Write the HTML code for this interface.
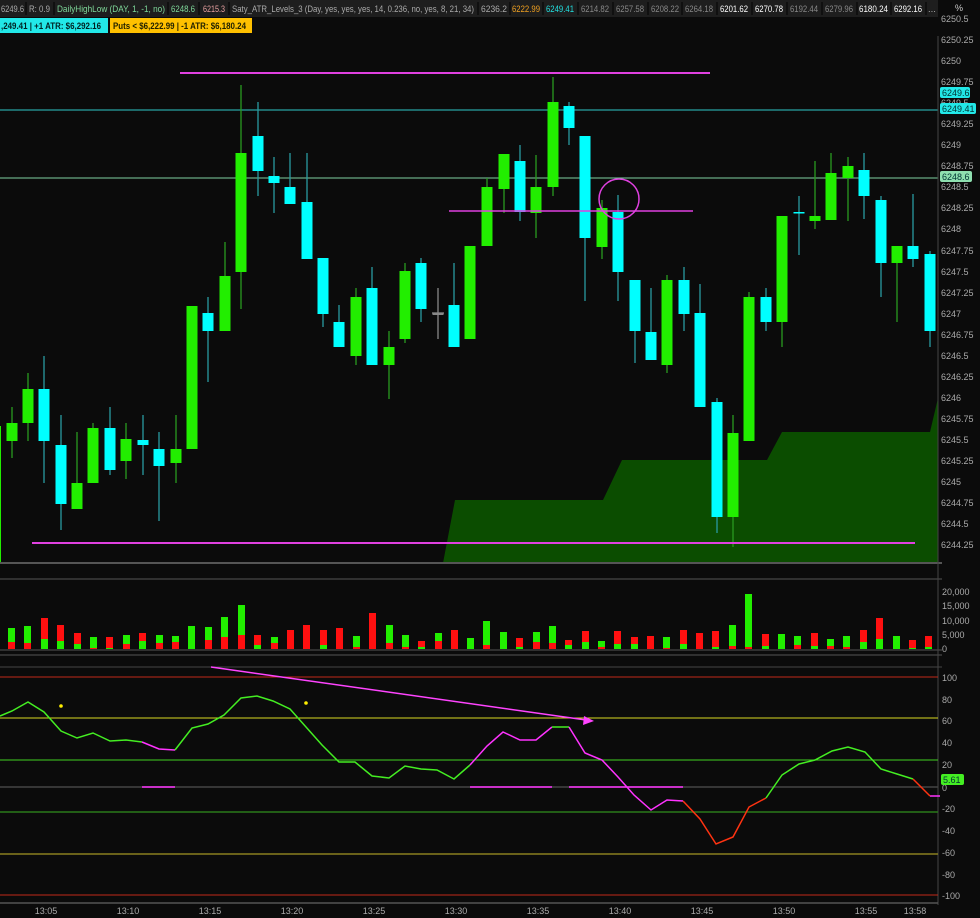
<!DOCTYPE html>
<html><head><meta charset="utf-8"><style>
html,body{margin:0;padding:0;background:#0b0b0b;width:980px;height:918px;overflow:hidden}
svg{display:block}
text{font-family:"Liberation Sans",sans-serif}
</style></head><body>
<svg id="s" width="980" height="918" xmlns="http://www.w3.org/2000/svg">
<rect width="980" height="918" fill="#0b0b0b"/>
<polygon points="443,563 455,500 603,500 622,460 767,460 782,432 930,432 938,398 938,563" fill="#0b4d00"/>
<line x1="0" y1="110" x2="938" y2="110" stroke="#2fc9c9" stroke-width="1"/>
<line x1="0" y1="178" x2="938" y2="178" stroke="#7fd0a0" stroke-width="1"/>
<g id="candles"></g>
<line x1="180" y1="73" x2="710" y2="73" stroke="#e040e0" stroke-width="2"/>
<line x1="449" y1="211" x2="693" y2="211" stroke="#e040e0" stroke-width="1.5"/>
<line x1="32" y1="543" x2="915" y2="543" stroke="#e040e0" stroke-width="2"/>
<circle cx="619" cy="199" r="20" fill="none" stroke="#e040e0" stroke-width="1.5"/>
<line x1="0" y1="426" x2="0" y2="562" stroke="#22ee00" stroke-width="2"/>
<line x1="0" y1="563" x2="942" y2="563" stroke="#555" stroke-width="2"/>
<line x1="0" y1="579" x2="942" y2="579" stroke="#555" stroke-width="1"/>
<line x1="0" y1="650" x2="942" y2="650" stroke="#555" stroke-width="1"/>
<line x1="0" y1="655" x2="942" y2="655" stroke="#555" stroke-width="1"/>
<line x1="0" y1="667" x2="942" y2="667" stroke="#444" stroke-width="1"/>
<line x1="938" y1="36" x2="938" y2="905" stroke="#444" stroke-width="1"/>
<g id="vol"></g>
<line x1="0" y1="677" x2="938" y2="677" stroke="#c0281a"/>
<line x1="0" y1="718" x2="938" y2="718" stroke="#d8d820"/>
<line x1="0" y1="760" x2="938" y2="760" stroke="#40d020"/>
<line x1="0" y1="787" x2="938" y2="787" stroke="#444" stroke-width="1.5"/>
<line x1="0" y1="812" x2="938" y2="812" stroke="#2a7a1a" stroke-width="1.5"/>
<line x1="0" y1="854" x2="938" y2="854" stroke="#8a8020" stroke-width="1.5"/>
<line x1="0" y1="895" x2="938" y2="895" stroke="#c0281a"/>
<line x1="0" y1="903" x2="938" y2="903" stroke="#555" stroke-width="1.5"/>
<g stroke="#ff33ff" stroke-width="1.5"><line x1="142" y1="787" x2="175" y2="787"/><line x1="470" y1="787" x2="552" y2="787"/><line x1="569" y1="787" x2="683" y2="787"/><line x1="930" y1="796" x2="940" y2="796"/></g>
<polyline fill="none" stroke="#44ee22" stroke-width="1.5" points="0,716 12,711 28,702 44,712 61,731 77,738 93,733 110,741 126,740 142,742"/>
<polyline fill="none" stroke="#ff33ff" stroke-width="1.5" points="142,742 159,749 175,750"/>
<polyline fill="none" stroke="#44ee22" stroke-width="1.5" points="175,750 192,728 208,724 224,715 241,698 257,696 273,701 290,709 306,727 322,745 339,762 355,762 372,776 389,778 405,766 421,769 437,770 454,779 470,765"/>
<polyline fill="none" stroke="#ff33ff" stroke-width="1.5" points="470,765 487,746 503,732 520,740 536,740 552,727"/>
<polyline fill="none" stroke="#44ee22" stroke-width="1.5" points="552,727 569,727"/>
<polyline fill="none" stroke="#ff33ff" stroke-width="1.5" points="569,727 585,753 602,760 618,777 634,795 651,810 667,800 683,801"/>
<polyline fill="none" stroke="#ff3311" stroke-width="1.5" points="683,801 700,819 716,844 733,837 749,807 766,798"/>
<polyline fill="none" stroke="#44ee22" stroke-width="1.5" points="766,798 782,775 799,764 815,760 832,751 848,747 865,752 881,769 897,774 913,779"/>
<polyline fill="none" stroke="#ff3311" stroke-width="1.5" points="913,779 930,796"/>
<circle cx="61" cy="706" r="1.8" fill="#ffee00"/><circle cx="306" cy="703" r="1.8" fill="#ffee00"/>
<line x1="211" y1="667" x2="586" y2="720" stroke="#ff44ff" stroke-width="1.5"/>
<polygon points="594,721 584,716 583,725" fill="#ff44ff"/>
<g font-size="9" fill="#aaa">
<text x="941" y="22">6250.5</text><text x="941" y="43">6250.25</text><text x="941" y="64">6250</text><text x="941" y="85">6249.75</text><text x="941" y="106">6249.5</text><text x="941" y="127">6249.25</text><text x="941" y="148">6249</text><text x="941" y="169">6248.75</text><text x="941" y="190">6248.5</text><text x="941" y="211">6248.25</text><text x="941" y="232">6248</text><text x="941" y="254">6247.75</text><text x="941" y="275">6247.5</text><text x="941" y="296">6247.25</text><text x="941" y="317">6247</text><text x="941" y="338">6246.75</text><text x="941" y="359">6246.5</text><text x="941" y="380">6246.25</text><text x="941" y="401">6246</text><text x="941" y="422">6245.75</text><text x="941" y="443">6245.5</text><text x="941" y="464">6245.25</text><text x="941" y="485">6245</text><text x="941" y="506">6244.75</text><text x="941" y="527">6244.5</text><text x="941" y="548">6244.25</text>
<text x="942" y="595">20,000</text><text x="942" y="609">15,000</text><text x="942" y="624">10,000</text><text x="942" y="638">5,000</text><text x="942" y="652">0</text>
<text x="942" y="681">100</text><text x="942" y="703">80</text><text x="942" y="724">60</text><text x="942" y="746">40</text><text x="942" y="768">20</text><text x="942" y="791">0</text><text x="942" y="812">-20</text><text x="942" y="834">-40</text><text x="942" y="856">-60</text><text x="942" y="878">-80</text><text x="942" y="899">-100</text>
</g>
<rect x="940" y="87" width="30" height="11" rx="2" fill="#22e8e8"/><text x="942" y="96" font-size="9" fill="#033">6249.6</text>
<rect x="940" y="103" width="36" height="11" rx="2" fill="#22e8e8"/><text x="942" y="112" font-size="9" fill="#033">6249.41</text>
<rect x="940" y="171" width="32" height="11" rx="2" fill="#8fe0b0"/><text x="942" y="180" font-size="9" fill="#033">6248.6</text>
<rect x="941" y="774" width="23" height="11" rx="2" fill="#44ee22"/><text x="943" y="783" font-size="9" fill="#033">5.61</text>
<g font-size="9" fill="#aaa" text-anchor="middle">
<text x="46" y="914">13:05</text><text x="128" y="914">13:10</text><text x="210" y="914">13:15</text><text x="292" y="914">13:20</text><text x="374" y="914">13:25</text><text x="456" y="914">13:30</text><text x="538" y="914">13:35</text><text x="620" y="914">13:40</text><text x="702" y="914">13:45</text><text x="784" y="914">13:50</text><text x="866" y="914">13:55</text><text x="915" y="914">13:58</text>
</g>
<rect x="0" y="0" width="938" height="17" fill="#1e1e1e"/>
<g font-size="9.5" lengthAdjust="spacingAndGlyphs">
<text x="1" y="12" fill="#aaa" textLength="23" lengthAdjust="spacingAndGlyphs">6249.6</text>
<text x="29" y="12" fill="#aaa" textLength="21" lengthAdjust="spacingAndGlyphs">R: 0.9</text>
<text x="57" y="12" fill="#7fd89a" textLength="108" lengthAdjust="spacingAndGlyphs">DailyHighLow (DAY, 1, -1, no)</text>
<text x="171" y="12" fill="#7fd89a" textLength="24" lengthAdjust="spacingAndGlyphs">6248.6</text>
<text x="203" y="12" fill="#e8a0a0" textLength="22" lengthAdjust="spacingAndGlyphs">6215.3</text>
<text x="232" y="12" fill="#aaa" textLength="242" lengthAdjust="spacingAndGlyphs">Saty_ATR_Levels_3 (Day, yes, yes, yes, 14, 0.236, no, yes, 8, 21, 34)</text>
<text x="481" y="12" fill="#aaa" textLength="26" lengthAdjust="spacingAndGlyphs">6236.2</text>
<text x="512" y="12" fill="#f0a020" textLength="28" lengthAdjust="spacingAndGlyphs">6222.99</text>
<text x="546" y="12" fill="#22e0e0" textLength="28" lengthAdjust="spacingAndGlyphs">6249.41</text>
<text x="581" y="12" fill="#888" textLength="28" lengthAdjust="spacingAndGlyphs">6214.82</text>
<text x="616" y="12" fill="#888" textLength="28" lengthAdjust="spacingAndGlyphs">6257.58</text>
<text x="651" y="12" fill="#888" textLength="28" lengthAdjust="spacingAndGlyphs">6208.22</text>
<text x="685" y="12" fill="#888" textLength="28" lengthAdjust="spacingAndGlyphs">6264.18</text>
<text x="720" y="12" fill="#fff" textLength="28" lengthAdjust="spacingAndGlyphs">6201.62</text>
<text x="755" y="12" fill="#fff" textLength="28" lengthAdjust="spacingAndGlyphs">6270.78</text>
<text x="790" y="12" fill="#888" textLength="28" lengthAdjust="spacingAndGlyphs">6192.44</text>
<text x="825" y="12" fill="#888" textLength="28" lengthAdjust="spacingAndGlyphs">6279.96</text>
<text x="859" y="12" fill="#fff" textLength="29" lengthAdjust="spacingAndGlyphs">6180.24</text>
<text x="894" y="12" fill="#fff" textLength="28" lengthAdjust="spacingAndGlyphs">6292.16</text>
<text x="928" y="12" fill="#aaa">...</text>
</g>
<g stroke="#0b0b0b" stroke-width="1.5"><line x1="26" y1="2" x2="26" y2="15"/><line x1="54" y1="2" x2="54" y2="15"/><line x1="168" y1="2" x2="168" y2="15"/><line x1="199" y1="2" x2="199" y2="15"/><line x1="229" y1="2" x2="229" y2="15"/><line x1="478" y1="2" x2="478" y2="15"/><line x1="510" y1="2" x2="510" y2="15"/><line x1="543" y1="2" x2="543" y2="15"/><line x1="578" y1="2" x2="578" y2="15"/><line x1="613" y1="2" x2="613" y2="15"/><line x1="648" y1="2" x2="648" y2="15"/><line x1="682" y1="2" x2="682" y2="15"/><line x1="717" y1="2" x2="717" y2="15"/><line x1="752" y1="2" x2="752" y2="15"/><line x1="787" y1="2" x2="787" y2="15"/><line x1="822" y1="2" x2="822" y2="15"/><line x1="857" y1="2" x2="857" y2="15"/><line x1="891" y1="2" x2="891" y2="15"/><line x1="926" y1="2" x2="926" y2="15"/></g>
<text x="955" y="11" font-size="9" fill="#ccc">%</text>
<rect x="0" y="18" width="108" height="15" fill="#22e8e8"/>
<text x="1" y="29" font-size="9.5" font-weight="bold" fill="#022" textLength="100" lengthAdjust="spacingAndGlyphs">,249.41 | +1 ATR: $6,292.16</text>
<rect x="110" y="18" width="142" height="15" fill="#ffc000"/>
<text x="113" y="29" font-size="9.5" font-weight="bold" fill="#220" textLength="133" lengthAdjust="spacingAndGlyphs">Puts &lt; $6,222.99 | -1 ATR: $6,180.24</text>
</svg>
<script>
var NS="http://www.w3.org/2000/svg";
function el(p,t,a){var e=document.createElementNS(NS,t);for(var k in a)e.setAttribute(k,a[k]);p.appendChild(e);return e;}
var C=[[12,423,441,407,458,'g'],[28,389,423,373,441,'g'],[44,389,441,356,483,'c'],[61,445,504,415,530,'c'],[77,483,509,432,509,'g'],[93,428,483,423,483,'g'],[110,428,470,407,475,'c'],[126,439,461,423,479,'g'],[143,440,445,415,475,'c'],[159,449,466,432,521,'c'],[176,449,463,415,483,'g'],[192,306,449,306,449,'g'],[208,313,331,297,382,'c'],[225,276,331,242,331,'g'],[241,153,272,85,309,'g'],[258,136,171,102,196,'c'],[274,176,183,157,213,'c'],[290,187,204,153,204,'c'],[307,202,259,153,259,'c'],[323,258,314,258,327,'c'],[339,322,347,305,347,'c'],[356,297,356,288,365,'g'],[372,288,365,267,365,'c'],[389,347,365,331,399,'g'],[405,271,339,263,343,'g'],[421,263,309,258,322,'c'],[438,313,315,288,339,'d'],[454,305,347,263,347,'c'],[470,246,339,246,339,'g'],[487,187,246,178,246,'g'],[504,154,189,154,213,'g'],[520,161,212,145,221,'c'],[536,187,213,155,238,'g'],[553,102,187,77,196,'g'],[569,106,128,102,145,'c'],[585,136,238,136,301,'c'],[602,208,247,200,259,'g'],[618,212,272,195,301,'c'],[635,280,331,280,363,'c'],[651,332,360,288,360,'c'],[667,280,365,275,373,'g'],[684,280,314,267,331,'c'],[700,313,407,284,407,'c'],[717,402,517,398,533,'c'],[733,433,517,415,547,'g'],[749,297,441,292,441,'g'],[766,297,322,288,331,'c'],[782,216,322,216,347,'g'],[799,212,213,196,255,'c'],[815,216,221,161,229,'g'],[831,173,220,153,220,'g'],[848,166,178,157,221,'g'],[864,170,196,153,219,'c'],[881,200,263,196,297,'c'],[897,246,263,246,322,'g'],[913,246,259,194,267,'c'],[930,254,331,251,347,'c']];
var g=document.getElementById('candles');
C.forEach(function(c){var col=c[5]=='g'?'#22ee00':c[5]=='c'?'#00ffff':'#888';var wc=c[5]=='g'?'#2a9a20':c[5]=='c'?'#2a9aa0':'#888';
el(g,'line',{x1:c[0],x2:c[0],y1:c[3],y2:c[4],stroke:wc,'stroke-width':1.3});
var h=Math.max(c[2]-c[1],1.5);el(g,'rect',{x:c[0]-5.5,y:c[1],width:11,height:h,fill:col});
if(c[5]=='d')el(g,'line',{x1:c[0]-6,x2:c[0]+6,y1:c[1],y2:c[1],stroke:'#888','stroke-width':1.3});});
var V=[[11,628,642,'G'],[27,626,643,'G'],[44,618,639,'R'],[60,625,641,'R'],[77,633,644,'R'],[93,637,648,'G'],[109,637,648,'R'],[126,635,644,'G'],[142,633,641,'R'],[159,635,643,'G'],[175,636,642,'G'],[191,626,0,'G'],[208,627,640,'G'],[224,617,637,'G'],[241,605,635,'G'],[257,635,645,'R'],[274,637,643,'G'],[290,630,0,'R'],[306,625,0,'R'],[323,630,645,'R'],[339,628,0,'R'],[356,636,647,'G'],[372,613,0,'R'],[389,625,643,'G'],[405,635,647,'G'],[421,641,647,'R'],[438,633,641,'G'],[454,630,0,'R'],[470,638,0,'G'],[486,621,645,'G'],[503,632,0,'G'],[519,638,647,'R'],[536,632,642,'G'],[552,626,643,'G'],[568,640,645,'R'],[585,631,642,'R'],[601,641,647,'G'],[617,631,644,'R'],[634,637,644,'R'],[650,636,0,'R'],[666,637,648,'G'],[683,630,644,'R'],[699,633,0,'R'],[715,631,647,'R'],[732,625,646,'G'],[748,594,647,'G'],[765,634,646,'R'],[781,634,0,'G'],[797,636,645,'G'],[814,633,646,'R'],[830,639,646,'G'],[846,636,647,'G'],[863,630,642,'R'],[879,618,639,'R'],[896,636,0,'G'],[912,640,648,'R'],[928,636,647,'R']];
var v=document.getElementById('vol');
V.forEach(function(b){var top=b[3]=='G'?'#22ee00':'#ff1010',bot=b[3]=='G'?'#ff1010':'#22ee00';
el(v,'rect',{x:b[0]-3,y:b[1],width:7,height:649-b[1],fill:top});
if(b[2])el(v,'rect',{x:b[0]-3,y:b[2],width:7,height:649-b[2],fill:bot});});
</script>
</body></html>
